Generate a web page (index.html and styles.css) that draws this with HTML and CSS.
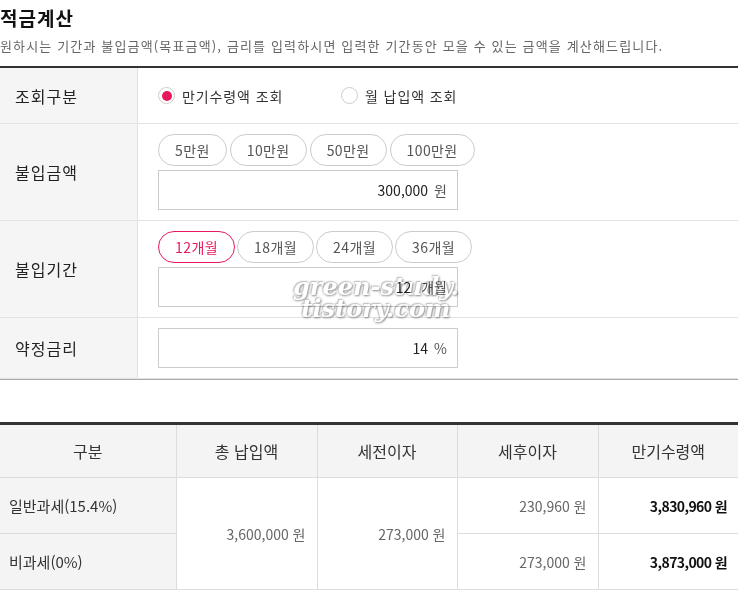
FILE: index.html
```html
<!DOCTYPE html>
<html lang="ko">
<head>
<meta charset="utf-8">
<title>적금계산</title>
<link rel="stylesheet" href="styles.css">
</head>
<body>
<div class="wrap">
  <h1 class="title">적금계산</h1>
  <p class="desc">원하시는 기간과 불입금액(목표금액), 금리를 입력하시면 입력한 기간동안 모을 수 있는 금액을 계산해드립니다.</p>

  <div class="form">
    <div class="row row-radio">
      <div class="label">조회구분</div>
      <div class="field radios">
        <label class="radio checked"><span class="dot"></span>만기수령액 조회</label>
        <label class="radio"><span class="dot"></span>월 납입액 조회</label>
      </div>
    </div>
    <div class="row">
      <div class="label">불입금액</div>
      <div class="field">
        <div class="chips">
          <span class="chip">5만원</span>
          <span class="chip">10만원</span>
          <span class="chip">50만원</span>
          <span class="chip">100만원</span>
        </div>
        <div class="input"><span class="num">300,000</span><span class="unit">원</span></div>
      </div>
    </div>
    <div class="row">
      <div class="label">불입기간</div>
      <div class="field">
        <div class="chips months">
          <span class="chip on">12개월</span>
          <span class="chip">18개월</span>
          <span class="chip">24개월</span>
          <span class="chip">36개월</span>
        </div>
        <div class="input"><span class="num">12</span><span class="unit unit-wide">개월</span></div>
      </div>
    </div>
    <div class="row">
      <div class="label">약정금리</div>
      <div class="field">
        <div class="input"><span class="num">14</span><span class="unit">%</span></div>
      </div>
    </div>
    <div class="watermark"><span>green-study.</span><span>tistory.com</span></div>
  </div>

  <table class="result">
    <colgroup>
      <col class="c1"><col class="c2"><col class="c3"><col class="c4"><col class="c5">
    </colgroup>
    <thead>
      <tr><th>구분</th><th>총 납입액</th><th>세전이자</th><th>세후이자</th><th>만기수령액</th></tr>
    </thead>
    <tbody>
      <tr>
        <td class="kind">일반과세(15.4%)</td>
        <td class="amt" rowspan="2">3,600,000 원</td>
        <td class="amt" rowspan="2">273,000 원</td>
        <td class="amt">230,960 원</td>
        <td class="amt total">3,830,960 원</td>
      </tr>
      <tr>
        <td class="kind">비과세(0%)</td>
        <td class="amt">273,000 원</td>
        <td class="amt total">3,873,000 원</td>
      </tr>
    </tbody>
  </table>
</div>
</body>
</html>
```

FILE: styles.css
```css
* { box-sizing: border-box; }
html, body { margin: 0; padding: 0; background: #fff; }
body {
  font-family: "Noto Sans CJK KR", "Noto Sans", sans-serif;
  color: #222;
}
.wrap { width: 738px; padding-top: 4px; }
.title {
  margin: 0;
  font-size: 19px;
  line-height: 28px;
  font-weight: 700;
  color: #111;
  letter-spacing: 1px;
}
.desc {
  margin: 4px 0 10px;
  font-size: 13px;
  line-height: 20px;
  color: #666;
  letter-spacing: 1.15px;
  white-space: nowrap;
}
.form {
  position: relative;
  border-top: 2px solid #333;
  border-bottom: 1px solid #aaa;
}
.row {
  display: grid;
  grid-template-columns: 138px 1fr;
  border-bottom: 1px solid #e3e3e3;
}
.row:last-of-type { border-bottom: 0; }
.label {
  background: #f5f5f5;
  border-right: 1px solid #e3e3e3;
  padding-left: 15px;
  display: flex;
  align-items: center;
  font-size: 16px;
  color: #222;
  letter-spacing: 1px;
}
.field {
  padding: 10px 0 10px 20px;
  display: flex;
  flex-direction: column;
  gap: 4px;
}
.row-radio .field { height: 55px; padding: 0 0 0 20px; }
.radios { flex-direction: row; align-items: center; gap: 0; }
.radio {
  display: flex;
  align-items: center;
  gap: 7px;
  font-size: 14px;
  color: #333;
  width: 183px;
  letter-spacing: 0.9px;
}
.dot {
  width: 17px;
  height: 17px;
  border-radius: 50%;
  border: 1px solid #ccc;
  background: #fff;
  display: inline-flex;
  align-items: center;
  justify-content: center;
}
.radio.checked .dot::after {
  content: "";
  width: 10px;
  height: 10px;
  border-radius: 50%;
  background: #e8195a;
}
.chips { display: flex; gap: 3px; }
.chip {
  height: 32px;
  padding: 0 16px;
  border: 1px solid #ccc;
  border-radius: 16px;
  display: inline-flex;
  align-items: center;
  justify-content: center;
  font-size: 14px;
  color: #555;
  background: #fff;
  letter-spacing: 0.4px;
}
.months { gap: 2px; }
.months .chip { padding: 0; width: 77px; }
.chip.on { border-color: #e8195a; color: #e8195a; }
.input {
  width: 300px;
  height: 40px;
  border: 1px solid #ccc;
  display: flex;
  align-items: center;
  justify-content: flex-end;
  padding-right: 10px;
  font-size: 14px;
}
.num { color: #222; }
.unit { color: #555; margin-left: 6px; }
.unit-wide { margin-left: 10px; }
.watermark {
  position: absolute;
  left: 293px;
  top: 208px;
  display: flex;
  flex-direction: column;
  align-items: center;
  font-family: "DejaVu Serif", serif;
  font-weight: 700;
  font-style: italic;
  font-size: 24px;
  line-height: 22px;
  color: #fff;
  text-shadow: 1px 1px 2px #999, -1px -1px 1px #c4c4c4, 0 0 3px #b0b0b0;
  mix-blend-mode: multiply;
  pointer-events: none;
}
.result {
  margin-top: 42px;
  width: 738px;
  border-collapse: collapse;
  table-layout: fixed;
  border-top: 3px solid #333;
  border-bottom: 1px solid #333;
}
.c1 { width: 176px; }
.c2 { width: 141px; }
.c3 { width: 140px; }
.c4 { width: 141px; }
.c5 { width: 140px; }
.result th {
  height: 54px;
  background: #f4f4f4;
  font-weight: 400;
  font-size: 16px;
  color: #333;
  border-left: 1px solid #ddd;
  border-bottom: 1px solid #ddd;
}
.result th:first-child { border-left: 0; }
.result td {
  height: 56px;
  font-size: 14px;
  border-left: 1px solid #ddd;
  border-bottom: 1px solid #ddd;
}
.result td.kind {
  border-left: 0;
  background: #f4f4f4;
  padding-left: 9px;
  font-size: 15px;
  color: #333;
}
.result td.amt { text-align: right; padding-right: 11px; color: #666; }
.result td.total { font-weight: 700; color: #111; letter-spacing: -0.6px; }
```
